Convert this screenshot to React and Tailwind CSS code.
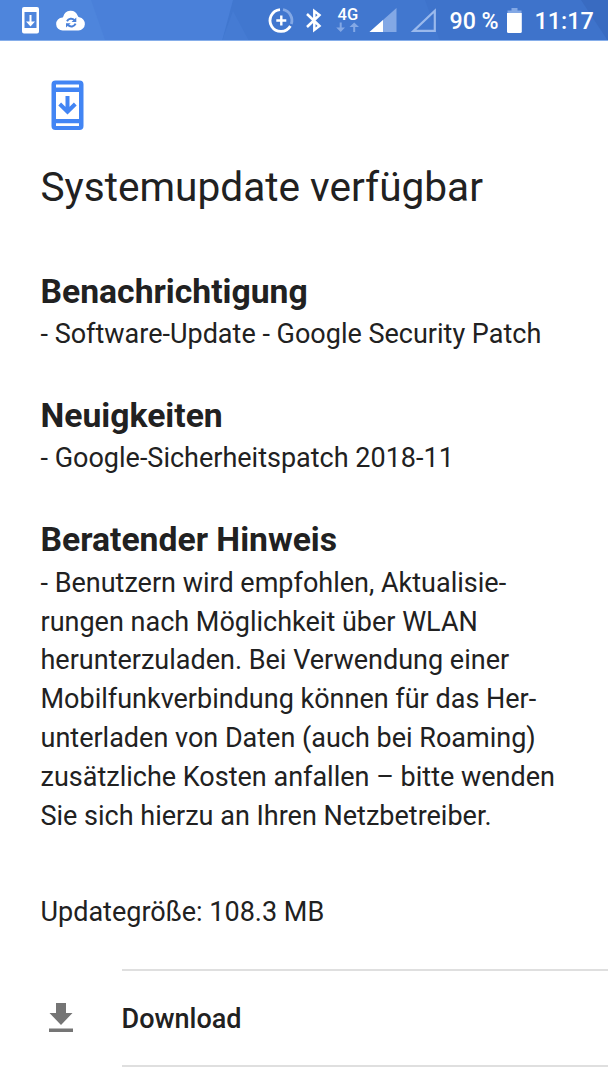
const sections = [
  {
    title: 'Benachrichtigung',
    lines: ['- Software-Update - Google Security Patch'],
  },
  {
    title: 'Neuigkeiten',
    lines: ['- Google-Sicherheitspatch 2018-11'],
  },
  {
    title: 'Beratender Hinweis',
    lines: [
      '- Benutzern wird empfohlen, Aktualisie-',
      'rungen nach Möglichkeit über WLAN',
      'herunterzuladen. Bei Verwendung einer',
      'Mobilfunkverbindung können für das Her-',
      'unterladen von Daten (auch bei Roaming)',
      'zusätzliche Kosten anfallen – bitte wenden',
      'Sie sich hierzu an Ihren Netzbetreiber.',
    ],
  },
];

function StatusBackdrop() {
  return (
    <svg className="absolute inset-0 h-full w-full" viewBox="0 0 608 41" preserveAspectRatio="none" aria-hidden="true">
      <path d="M0 0H91L105 40H0z" fill="#4e85dc" />
      <path d="M233 0H608V41H222z" fill="#4177cf" />
      <path d="M233 11L249 41H222z" fill="#457bd3" />
      <path d="M425 0H608V41H440z" fill="#3e73cb" />
      <path d="M581 0H608V41z" fill="#396bc1" />
      <path d="M0 40H608V41H0z" fill="#86aeea" />
    </svg>
  );
}

function StatusBar() {
  return (
    <header className="relative h-[41px] bg-[#4a80d9] text-white">
      <StatusBackdrop />
      <div className="relative flex h-10 items-center">
        {/* Notifications */}
        <svg className="ml-[21px] h-10 w-[20px]" viewBox="21 0 20 40" aria-hidden="true">
          <path
            fillRule="evenodd"
            d="M24 7H37Q39 7 39 9V31.500Q39 33.500 37 33.500H24Q22 33.500 22 31.500V9Q22 7 24 7zM24.500 12V28H36.500V12z"
            fill="#fff"
          />
          <path d="M29.500 15H31.500V21.500H35L30.500 26.500L26 21.500H29.500z" fill="#fff" />
        </svg>
        <svg className="ml-[14px] h-10 w-[32px]" viewBox="55 0 32 40" aria-hidden="true">
          <path
            d="M62.800 30.500A6.400 6.400 0 0 1 62.500 17.500Q63.100 17.300 63.300 16.500A7.500 7.500 0 0 1 77.600 15.500Q78 17 79.300 17.200A6.700 6.700 0 0 1 78.500 30.500z"
            fill="#fff"
          />
          <path d="M67 21.200A4.600 4.600 0 0 1 74.500 20.200M75.600 23.700A4.600 4.600 0 0 1 68 25" fill="none" stroke="#4a80d9" strokeWidth="2" />
          <path d="M76.300 17.500V22H71.500zM66 27.500V23.300H70.700z" fill="#4a80d9" />
        </svg>

        {/* System icons */}
        <svg className="ml-[181px] h-10 w-[28px]" viewBox="268 0 28 40" aria-hidden="true">
          <path d="M280 9.700A10.900 10.900 0 1 0 290.400 26" fill="none" stroke="#fff" strokeWidth="2.800" />
          <path d="M283 9.700A10.900 10.900 0 0 1 291.300 24" fill="none" stroke="#83a8e5" strokeWidth="2.800" />
          <path d="M281.300 15.500V25.500M276.300 20.500H286.300" stroke="#fff" strokeWidth="2.400" />
        </svg>
        <svg className="ml-[8px] h-10 w-[20px]" viewBox="304 0 20 40" aria-hidden="true">
          <path d="M307 14L319.500 26L314.300 30V11L319.500 15L307 27" fill="none" stroke="#fff" strokeWidth="2.500" />
        </svg>
        <div className="ml-[12px] flex h-10 w-[24px] flex-col items-center pt-[7px]">
          <span className="text-[16.500px] leading-[15px] font-medium tracking-[0.3px]">4G</span>
          <svg className="h-[11px] w-[24px]" viewBox="336 22 24 11" aria-hidden="true">
            <path d="M339.700 22.500H341.700V27.500H345L340.700 32L336.200 27.500H339.700zM353.200 32V27H349.500L354.200 22.500L359 27H355.200V32z" fill="#83a8e5" />
          </svg>
        </div>
        <svg className="ml-[9px] h-10 w-[28px]" viewBox="369 0 28 40" aria-hidden="true">
          <path d="M396.500 8V32H369.500z" fill="#83a8e5" />
          <path d="M383 20V32H369.500z" fill="#fff" />
        </svg>
        <svg className="ml-[13px] h-10 w-[28px]" viewBox="410 0 28 40" aria-hidden="true">
          <path d="M434.800 10.800V30.900H413.500z" fill="none" stroke="#9ab9ec" strokeWidth="2.200" />
        </svg>
        <span className="ml-[11.500px] w-[50.500px] pt-[2px] text-[23.200px] leading-10 font-medium whitespace-nowrap">90 %</span>
        <svg className="ml-[6px] h-10 w-[18px]" viewBox="506 0 18 40" aria-hidden="true">
          <path d="M511.500 8H517.500V10.500H521.500V13H507.500V10.500H511.500z" fill="#83a8e5" />
          <path d="M507 13H521.800V31.500Q521.800 33 520.300 33H508.500Q507 33 507 31.500z" fill="#fff" />
        </svg>
        <span className="ml-[10.500px] pt-[2px] text-[23.400px] leading-10 font-medium whitespace-nowrap">11:17</span>
      </div>
    </header>
  );
}

function UpdateIcon() {
  return (
    <svg className="h-[50px] w-[33px]" viewBox="0 0 33 50" aria-hidden="true">
      <path
        fillRule="evenodd"
        d="M4.500 0.500H28.500Q32.500 0.500 32.500 4.500V46Q32.500 50 28.500 50H4.500Q0.500 50 0.500 46V4.500Q0.500 0.500 4.500 0.500zM5 4.500V7.500H28V4.500zM5 12V39H28V12zM5 43.300V46H28V43.300z"
        fill="#4285f4"
      />
      <path d="M16.500 16V31M8.700 24L16.500 31.700L24.300 24" fill="none" stroke="#4285f4" strokeWidth="4" />
    </svg>
  );
}

export default function App() {
  return (
    <div className="h-[1080px] w-[608px] overflow-hidden bg-white font-['Roboto',sans-serif] text-[#212121]">
      <StatusBar />
      <main>
        <div className="px-[40.500px] pt-[39px]">
          <div className="pl-[10.500px]">
            <UpdateIcon />
          </div>
          <h1 className="mt-[33px] text-[40.600px] leading-[48px]">Systemupdate verfügbar</h1>

          <div className="mt-[57.500px] flex flex-col gap-[38.900px]">
            {sections.map((section) => (
              <section key={section.title}>
                <h2 className="text-[33.700px] leading-[46.600px] font-bold">{section.title}</h2>
                {section.lines.map((line) => (
                  <p key={line} className="text-[27px] leading-[38.850px] whitespace-nowrap">
                    {line}
                  </p>
                ))}
              </section>
            ))}
          </div>

          <p className="mt-[57.300px] text-[27px] leading-[38.800px]">Updategröße: 108.3 MB</p>
        </div>

        {/* Download action */}
        <div className="mt-[37px] flex h-[98px]">
          <div className="flex w-[121.500px] items-center pl-[49px]">
            <svg className="h-[29px] w-[24px]" viewBox="0 0 24 29" aria-hidden="true">
              <path d="M7 0H17V10H23.500L12 22L0.500 10H7zM0 25.500H24V29H0z" fill="#757575" />
            </svg>
          </div>
          <button className="flex-1 border-y-2 border-[#dfdfdf] pt-[3px] text-left text-[27px] font-medium">Download</button>
        </div>
      </main>
    </div>
  );
}
